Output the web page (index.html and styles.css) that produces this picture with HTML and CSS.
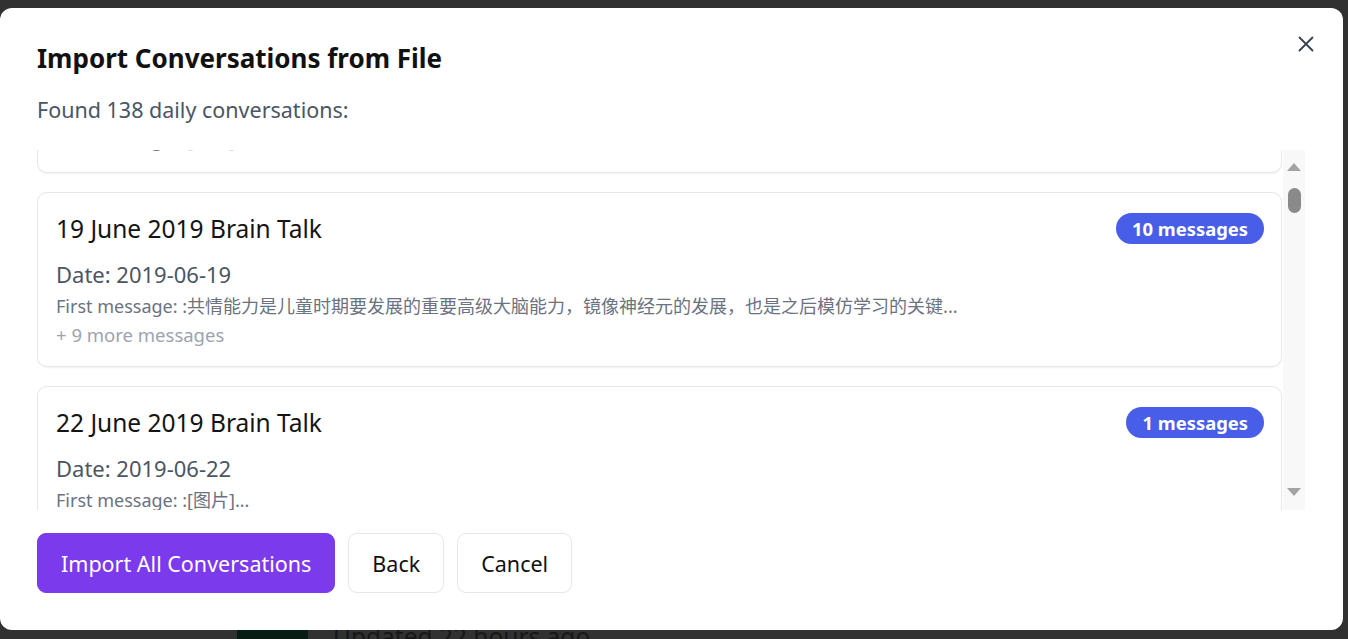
FILE: index.html
```html
<!DOCTYPE html>
<html lang="en">
<head>
<meta charset="utf-8">
<title>Import Conversations</title>
<link rel="stylesheet" href="styles.css">
</head>
<body>
<div class="page">
  <div class="page-row">
    <div class="thumb-square"></div>
    <div class="page-meta">Updated 22 hours ago</div>
  </div>
</div>

<div class="modal">
  <button class="close" aria-label="Close">
    <svg width="16" height="16" viewBox="0 0 16 16"><path d="M1.5 1.5 L14.5 14.5 M14.5 1.5 L1.5 14.5" stroke="#374151" stroke-width="1.8" stroke-linecap="round" fill="none"/></svg>
  </button>
  <h2 class="title">Import Conversations from File</h2>
  <p class="found">Found 138 daily conversations:</p>

  <div class="list-box">
    <div class="viewport">
      <div class="list">
        <div class="card">
          <div class="card-head">
            <span class="card-title">18 June 2019 Brain Talk</span>
            <span class="badge">1 messages</span>
          </div>
          <div class="card-date">Date: 2019-06-18</div>
          <div class="card-first">First message: :[图片]...</div>
        </div>
        <div class="card">
          <div class="card-head">
            <span class="card-title">19 June 2019 Brain Talk</span>
            <span class="badge">10 messages</span>
          </div>
          <div class="card-date">Date: 2019-06-19</div>
          <div class="card-first">First message: :共情能力是儿童时期要发展的重要高级大脑能力，镜像神经元的发展，也是之后模仿学习的关键...</div>
          <div class="card-more">+ 9 more messages</div>
        </div>
        <div class="card">
          <div class="card-head">
            <span class="card-title">22 June 2019 Brain Talk</span>
            <span class="badge">1 messages</span>
          </div>
          <div class="card-date">Date: 2019-06-22</div>
          <div class="card-first">First message: :[图片]...</div>
        </div>
      </div>
    </div>
    <div class="scrollbar">
      <span class="arrow-up"></span>
      <span class="sb-thumb"></span>
      <span class="sb-spacer"></span>
      <span class="arrow-down"></span>
    </div>
  </div>

  <div class="actions">
    <button class="btn btn-primary">Import All Conversations</button>
    <button class="btn btn-outline">Back</button>
    <button class="btn btn-outline">Cancel</button>
  </div>
</div>
</body>
</html>
```
FILE: styles.css
```css
* { box-sizing: border-box; }

html, body {
  margin: 0;
  padding: 0;
  height: 639px;
  overflow: hidden;
  background: #313131;
  font-family: "Noto Sans", "Noto Sans CJK SC", sans-serif;
}

.page {
  padding: 622px 0 0 237px;
}

.page-row {
  display: flex;
  align-items: flex-start;
  gap: 25px;
}

.thumb-square {
  width: 71px;
  height: 40px;
  background: #071c12;
}

.page-meta {
  font-size: 24.5px;
  line-height: 30px;
  color: #171717;
  padding-top: 0;
}

.modal {
  position: fixed;
  left: 0;
  top: 8px;
  width: 1343px;
  height: 622px;
  background: #ffffff;
  border-radius: 12px;
  padding: 34px 38px 37px 37px;
  display: flex;
  flex-direction: column;
}

.close {
  position: absolute;
  top: 28px;
  right: 29px;
  width: 16px;
  height: 16px;
  padding: 0;
  border: 0;
  background: transparent;
  display: flex;
}

.title {
  margin: 0;
  font-size: 26px;
  line-height: 32px;
  font-weight: 700;
  color: #111111;
}

.found {
  margin: 22px 0 0;
  font-size: 21.5px;
  line-height: 28px;
  color: #4b5563;
}

.list-box {
  margin-top: 26px;
  height: 360px;
  display: flex;
}

.viewport {
  flex: 1;
  overflow: hidden;
}

.list {
  margin-top: -124px;
  display: flex;
  flex-direction: column;
  gap: 19px;
}

.card {
  border: 1px solid #e5e7eb;
  border-radius: 10px;
  padding: 20px 17px 19px 18px;
  box-shadow: 0 1px 2px rgba(0, 0, 0, 0.05);
  background: #fff;
}

.card-head {
  display: flex;
  align-items: center;
  justify-content: space-between;
  height: 31px;
  margin-bottom: 16px;
}

.card-title {
  font-size: 24.5px;
  line-height: 28px;
  color: #141414;
}

.badge {
  background: #485ee8;
  color: #fff;
  font-weight: 700;
  font-size: 18.4px;
  line-height: 31px;
  height: 31px;
  padding: 0 16px;
  border-radius: 16px;
}

.card-date {
  font-size: 22px;
  line-height: 28px;
  color: #4b5563;
}

.card-first {
  margin-top: 6px;
  font-size: 18px;
  line-height: 25px;
  color: #6b7280;
}

.card-more {
  margin-top: 3px;
  font-size: 18.5px;
  line-height: 25px;
  color: #9ca3af;
}

.scrollbar {
  width: 22px;
  margin-left: 1px;
  background: #f8f8f8;
  display: flex;
  flex-direction: column;
  align-items: center;
  padding: 13px 0 14px;
}

.arrow-up, .arrow-down {
  width: 0;
  height: 0;
  border-left: 7.5px solid transparent;
  border-right: 7.5px solid transparent;
}

.arrow-up { border-bottom: 8px solid #a3a3a3; }
.arrow-down { border-top: 8px solid #a3a3a3; }

.sb-thumb {
  margin-top: 17px;
  width: 13px;
  height: 25px;
  border-radius: 7px;
  background: #8a8a8a;
}

.sb-spacer { flex: 1; }

.actions {
  margin-top: 23px;
  display: flex;
  gap: 13px;
}

.btn {
  height: 60px;
  border-radius: 9px;
  font-family: inherit;
  font-size: 21.5px;
  padding: 0 23px;
  cursor: pointer;
}

.btn-primary {
  background: #7c3aed;
  border: 1px solid #7c3aed;
  color: #fff;
}

.btn-outline {
  background: #fff;
  border: 1px solid #e5e7eb;
  color: #111;
}
```
